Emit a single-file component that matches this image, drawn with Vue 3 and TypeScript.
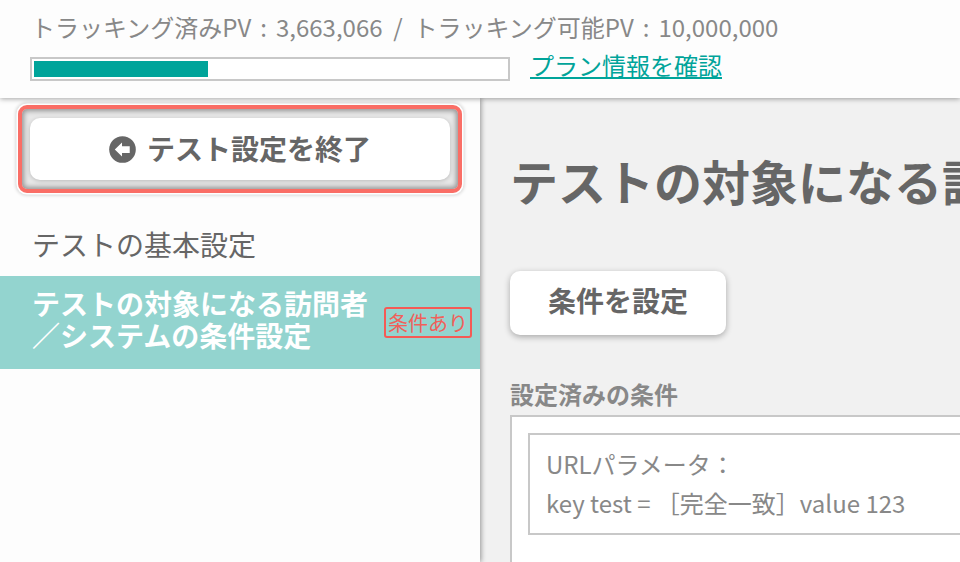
<script setup lang="ts">
const progress = 36.76
</script>

<template>
  <div class="page">
    <header class="top">
      <div class="stats">トラッキング済みPV<span class="colon">:</span>3,663,066 &nbsp;/&nbsp; トラッキング可能PV<span class="colon">:</span>10,000,000</div>
      <div class="usage">
        <div class="bar"><div class="fill" :style="{ width: progress + '%' }"></div></div>
        <a class="plan">プラン情報を確認</a>
      </div>
    </header>
    <div class="body">
      <aside class="side">
        <div class="focus">
          <button class="end">
            <svg class="icon" viewBox="0 0 28 28" width="27" height="27">
              <circle cx="14" cy="14" r="13.8" fill="#666" />
              <path d="M6 14 L13.5 6.8 V10.5 H21.5 V17.5 H13.5 V21.2 Z" fill="#fff" />
            </svg>
            <span class="end-text">テスト設定を終了</span>
          </button>
        </div>
        <div class="item">テストの基本設定</div>
        <div class="item active">
          <span class="label">テストの対象になる訪問者<br />／システムの条件設定</span>
          <span class="tag">条件あり</span>
        </div>
      </aside>
      <main class="main">
        <h1 class="title">テストの対象になる訪問者</h1>
        <button class="set">条件を設定</button>
        <div class="sub">設定済みの条件</div>
        <section class="box">
          <div class="cond">
            URLパラメータ：<br />key test = ［完全一致］value 123
          </div>
        </section>
      </main>
    </div>
  </div>
</template>

<style>
html, body { margin: 0; overflow: hidden; }
</style>

<style scoped>
.page {
  width: 960px;
  height: 562px;
  overflow: hidden;
  display: flex;
  flex-direction: column;
  background: #f1f1f1;
  font-family: "Noto Sans CJK JP", "Noto Sans", sans-serif;
}
.top {
  height: 98px;
  box-sizing: border-box;
  flex: none;
  background: #fdfdfd;
  padding: 8px 0 0 30px;
  box-shadow: 0 1px 5px rgba(0, 0, 0, 0.35);
  position: relative;
  z-index: 2;
}
.stats {
  font-size: 24px;
  line-height: 38px;
  color: #888;
  white-space: nowrap;
  margin-left: 1px;
}
.colon { margin: 0 9px; }
.usage {
  display: flex;
  align-items: center;
  gap: 21px;
  margin-top: 11px;
}
.bar {
  width: 480px;
  height: 24px;
  box-sizing: border-box;
  border: 2px solid #c8c8c8;
  padding: 2px;
  background: #fff;
}
.fill { height: 100%; background: #00a49a; }
.plan {
  font-size: 24px;
  line-height: 30px;
  color: #00a49a;
  text-decoration: underline;
  white-space: nowrap;
  margin-top: -8px;
  margin-left: -1px;
}
.body { flex: 1; display: flex; min-height: 0; }
.side {
  width: 480px;
  flex: none;
  background: #fdfdfd;
  box-shadow: 1px 0 5px rgba(0, 0, 0, 0.4);
  position: relative;
  z-index: 1;
  padding-top: 7px;
  box-sizing: border-box;
}
.focus {
  width: 444px;
  height: 88px;
  margin-left: 18px;
  box-sizing: border-box;
  border: 4px solid #fa6e66;
  border-radius: 9px;
  box-shadow: 0 0 0 1.5px #fff, 0 0 3px 3px rgba(0, 0, 0, 0.12), inset 0 0 5px 2px rgba(0, 0, 0, 0.36);
  background: #e8e8e8;
  padding: 9px 8px;
}
.end {
  width: 100%;
  height: 100%;
  border: 0;
  border-radius: 10px;
  background: #fff;
  color: #666;
  font: inherit;
  font-size: 28px;
  font-weight: 700;
  display: flex;
  align-items: center;
  justify-content: center;
  gap: 11px;
  box-shadow: 0 1px 4px rgba(0, 0, 0, 0.2);
  padding: 0;
}
.end-text { padding-bottom: 3px; }
.item {
  font-size: 28px;
  line-height: 36px;
  color: #666;
  padding-left: 32px;
  margin-top: 33px;
}
.item.active {
  margin-top: 14px;
  height: 93px;
  box-sizing: border-box;
  background: #93d4cf;
  color: #fff;
  font-weight: 700;
  line-height: 32px;
  display: flex;
  align-items: center;
  justify-content: space-between;
  padding-right: 8px;
}
.label { white-space: nowrap; margin-top: -8px; }
.tag {
  font-size: 20px;
  font-weight: 400;
  line-height: 27px;
  color: #f0605a;
  border: 2px solid #f55a55;
  border-radius: 3px;
  padding: 0 2px;
  white-space: nowrap;
}
.main {
  flex: 1;
  min-width: 0;
  padding: 50px 0 0 30px;
  overflow: hidden;
}
.title {
  margin: 0;
  font-size: 48px;
  line-height: 64px;
  font-weight: 700;
  color: #666;
  white-space: nowrap;
}
.set {
  display: block;
  margin-top: 59px;
  width: 216px;
  height: 64px;
  border: 0;
  border-radius: 10px;
  background: #fff;
  color: #666;
  font: inherit;
  font-size: 28px;
  font-weight: 700;
  box-shadow: 0 2px 6px rgba(0, 0, 0, 0.3);
  padding: 0 0 6px;
}
.sub {
  margin-top: 41px;
  font-size: 24px;
  line-height: 36px;
  font-weight: 700;
  color: #888;
}
.box {
  margin-top: 3px;
  width: 600px;
  height: 300px;
  box-sizing: border-box;
  border: 2px solid #c8c8c8;
  background: #fff;
  padding: 16px;
}
.cond {
  height: 102px;
  box-sizing: border-box;
  border: 2px solid #c8c8c8;
  padding: 9px 17px 0 16px;
  font-size: 24px;
  line-height: 39px;
  color: #888;
  white-space: nowrap;
}
</style>
